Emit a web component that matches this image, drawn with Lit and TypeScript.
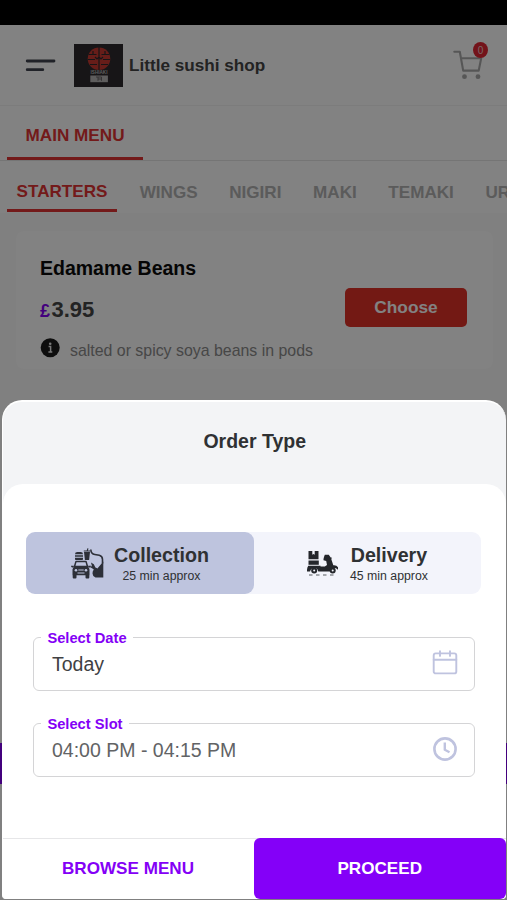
import { LitElement, html, css, svg } from "lit";
import { customElement } from "lit/decorators.js";

const menuIcon = html`<svg class="burger" width="32" height="14" viewBox="0 0 32 14">
  ${svg`<path d="M3.200 3H30M3.200 11.700H18.800" fill="none" stroke="#40444f" stroke-width="2.800" stroke-linecap="round"/>`}
</svg>`;

const logo = html`<svg class="logo" width="49" height="43" viewBox="0 0 49 43">
  <rect width="49" height="43" fill="#2e2a2d" />
  <circle cx="25" cy="14.8" r="11.3" fill="#c93a31" />
  <path
    d="M25 3v23M14.500 10.500h8M27.500 10.500h8M14 15.500h7M29 15.500h7M16 20.500h7M27 20.500h7M19 7v3.500M31 7v3.500M21 13l2 2 2-2 2 2 2-2"
    fill="none" stroke="#2e2a2d" stroke-width="1.200" />
  <text x="25" y="29.500" text-anchor="middle" class="logo-text">ISHIAKI</text>
  <rect x="16.300" y="31.500" width="17.600" height="6.700" fill="#b9b6b7" />
  <path d="M22 33h5.500v3.800M24 33v3.800M24 35h3" fill="none" stroke="#625e60" stroke-width=".9" />
</svg>`;

const cartIcon = html`<svg class="cart" width="30" height="30" viewBox="0 0 30 30">
  <path d="M1.300 1.800H6.800L10.200 20.600H25.700L28.200 8.300H8.200" fill="none" stroke="#a9a9a9"
    stroke-width="2.100" stroke-linejoin="round" stroke-linecap="round" />
  <circle cx="11.500" cy="26.700" r="2.400" fill="#a9a9a9" />
  <circle cx="25" cy="26.700" r="2.400" fill="#a9a9a9" />
</svg>`;

const infoIcon = html`<svg width="20" height="20" viewBox="0 0 20 20">
  <circle cx="10.200" cy="9.700" r="9.500" fill="#1c1c1c" />
  <circle cx="10.200" cy="5.700" r="1.300" fill="#eee" />
  <path d="M8.600 8.500h2v5M8.400 13.900h3.900" fill="none" stroke="#eee" stroke-width="1.500" />
</svg>`;

const collectionIcon = html`<svg width="33" height="31" viewBox="0 0 33 31">
  <g fill="#2d3039">
    <path d="M4 6.200q0-2.200 2.400-2.200h3.200q2.400 0 2.400 2.200zM4 7.200h8v1.600H4zM4 9.800h8v1.400q0 .8-.8.800H4.800q-.8 0-.8-.8z" />
    <path d="M13 4h6l-.9 8h-4.200zM12.800 2.500h2.900l.7-2.300 1.100.3-.6 2h2.300v1h-6.400z" />
    <path d="M1.500 21.500q0-2.200 2.400-3h12.200q2.400.8 2.400 3v5.700H1.500zM1.700 26h3.800v3.500q0 1-1 1H2.700q-1 0-1-1zM14.500 26h3.800v3.500q0 1-1 1h-1.800q-1 0-1-1z" />
    <path d="M0 17.800h2.800v1.700H1.200q-1.200 0-1.200-1.700zM17.200 17.800H20q0 1.700-1.200 1.700h-1.600z" />
    <path d="M22.500 22q1.500-1.200 3.500-.9l6.300-7.600v16H24.500q-3-1.300-3-4 0-2.200 1-3.500z" />
    <path d="M20 14.500l2.800 1.700 1.600 3.200 2.300 1.100-2.700 2.300-2.500-2.300-2.300-1.300 1.700-1.300z" />
  </g>
  <path d="M3.500 18.500L5 13.400h10l1.500 5.100z" fill="none" stroke="#2d3039" stroke-width="1.500" stroke-linejoin="round" />
  <path d="M19.800 1.500q.2 4.500 4 5l4.500.8q3.200.8 3.200 4.200v4" fill="none" stroke="#2d3039" stroke-width="1.600" />
  <circle cx="5" cy="22.300" r="1.300" fill="#bec4de" />
  <circle cx="15" cy="22.300" r="1.300" fill="#bec4de" />
  <path d="M7.300 22h5.400M6.500 25h7" stroke="#bec4de" stroke-width="1.200" />
</svg>`;

const deliveryIcon = html`<svg width="31" height="26" viewBox="0 0 31 26">
  <g fill="#24262b">
    <path d="M1.500 0h3.800v3.700l1.200-.8 1.200.8V0h3.800v8.300h-10z" />
    <path d="M1.500 9.500h10.300v4.300H1.500z" />
    <path d="M1.300 14.800h12.200v.7h4.300l2.200-1.500-.8-4-2.700-.7V8l.5-2 .8-2.200h4l1.900 2.600h1l-.3 2.200 1.900 5.700q4.500-.5 5.700 4.200h-1.500q-1.400-2.200-4-1.200-2.500 1-2.600 3.300H11.300q-.3-3.500-4-3.700-3.500.1-4.200 3.700H0q-.2-4 1.300-5.800z" />
    <circle cx="7.200" cy="19.400" r="3" />
    <circle cx="25.700" cy="19.400" r="3" />
  </g>
  <circle cx="7.200" cy="19.400" r="1" fill="#f3f4fb" />
  <circle cx="25.700" cy="19.400" r="1" fill="#f3f4fb" />
  <path d="M2 24H29" stroke="#8c8e94" stroke-width="1.400" stroke-dasharray="3.500 3.500" />
</svg>`;

const calendarIcon = html`<svg width="26" height="26" viewBox="0 0 26 26">
  <rect x="1.700" y="3.400" width="22.600" height="20" rx="2" fill="none" stroke="#bfc3df" stroke-width="1.900" />
  <path d="M1.700 9.800h22.600M8 1.300v4.600M18 1.300v4.600" fill="none" stroke="#bfc3df" stroke-width="1.900" stroke-linecap="round" />
</svg>`;

const clockIcon = html`<svg width="26" height="26" viewBox="0 0 26 26">
  <circle cx="13" cy="13" r="10.600" fill="none" stroke="#bfc3df" stroke-width="2.600" />
  <path d="M12.800 6.500v7.300l4.700 2.400" fill="none" stroke="#bfc3df" stroke-width="2.400" stroke-linejoin="round" />
</svg>`;

@customElement("app-root")
export class AppRoot extends LitElement {
  static styles = css`
    :host {
      display: block;
      position: relative;
      width: 507px;
      height: 900px;
      overflow: hidden;
      background: #fbfbfb;
      font-family: "Liberation Sans", Arial, sans-serif;
      color: #2f3133;
    }
    * { box-sizing: border-box; }
    svg { display: block; flex: none; }
    .page { display: flex; flex-direction: column; height: 900px; }
    .status { height: 25px; background: #000; flex: none; }
    header {
      display: flex;
      align-items: center;
      height: 81px;
      padding: 0 21px 0 24px;
      border-bottom: 1px solid #f3f3f3;
      background: #fff;
      flex: none;
    }
    .burger { margin-right: 18px; }
    .logo-text { font-size: 4.6px; font-weight: 700; fill: #b9b6b7; }
    .shop { flex: 1; margin-left: 6px; font-size: 17.15px; font-weight: 700; color: #454545; }
    .cart-box { position: relative; margin-right: 3px; }
    .badge {
      position: absolute;
      left: 20px;
      top: -8px;
      width: 15px;
      height: 16px;
      border-radius: 50%;
      background: #e22633;
      color: #f0c8ca;
      font-size: 10px;
      line-height: 17px;
      text-align: center;
    }
    .tabs { display: flex; height: 55px; padding: 0 7px; background: #fff; border-bottom: 1px solid #e6e6e6; flex: none; }
    .tab {
      width: 136px;
      height: 54px;
      border-bottom: 3px solid #e23434;
      color: #e23434;
      font-size: 17.15px;
      font-weight: 700;
      line-height: 59px;
      text-align: center;
    }
    .cats { display: flex; height: 52px; padding-left: 7px; background: #fff; color: #b3b3b3; flex: none; white-space: nowrap; overflow: hidden; }
    .cat { flex: none; font-size: 17.1px; font-weight: 700; line-height: 64px; margin-right: 31.6px; }
    .cat.on {
      width: 110px;
      height: 51px;
      margin-right: 22.700px;
      border-bottom: 3px solid #e23434;
      color: #e23434;
      line-height: 61px;
      text-align: center;
    }
    .card {
      display: flex;
      height: 138px;
      margin: 18px 14px 0 16px;
      padding: 21px 26px 0 24px;
      background: #fff;
      border-radius: 8px;
      flex: none;
    }
    .dish { flex: 1; white-space: nowrap; }
    .name { font-size: 19.5px; font-weight: 700; line-height: 32px; color: #0a0a0a; }
    .price { margin-top: 9px; font-size: 22px; font-weight: 700; line-height: 34px; color: #454545; }
    .price span { font-size: 18px; color: #8400f6; margin-right: 1.5px; }
    .note { display: flex; gap: 10px; margin-top: 10px; font-size: 15.9px; line-height: 26px; color: #8b8b8b; }
    .choose {
      width: 122px;
      height: 39px;
      margin-top: 36px;
      border-radius: 5px;
      background: #e23129;
      color: #fff;
      font-size: 17.3px;
      font-weight: 700;
      line-height: 39px;
      text-align: center;
    }
    .cart-bar { height: 41px; margin-top: 374px; background: #8400f6; flex: none; }
    .shade { position: absolute; inset: 25px 0 0 0; background: rgba(0, 0, 0, 0.49); }
    .sheet {
      position: absolute;
      inset: 400px 1.5px 1px 2px;
      display: flex;
      flex-direction: column;
      background: #f3f4f6;
      border: 1px solid #fff;
      border-width: 2px 0 0 1px;
      border-radius: 20px 20px 4px 4px;
      overflow: hidden;
    }
    .title { height: 82px; font-size: 19.5px; font-weight: 700; line-height: 79px; text-align: center; flex: none; padding-left: 1px; }
    .body {
      flex: 1;
      display: flex;
      flex-direction: column;
      padding: 48px 24.500px 0 23px;
      background: #fff;
      border-radius: 20px 20px 0 0;
    }
    .types { display: flex; height: 62px; background: #f3f4fb; border-radius: 9px; flex: none; }
    .type { display: flex; flex: 1; gap: 10px; padding-left: 45px; }
    .type.on { flex: 0 0 228px; background: #bec4de; border-radius: 9px; }
    .type svg { margin-top: 16px; }
    .type:not(.on) { padding-left: 53px; gap: 12px; }
    .type:not(.on) svg { margin-top: 19px; }
    .label { text-align: center; }
    .kind { font-size: 19.65px; font-weight: 700; line-height: 24px; margin-top: 11px; }
    .wait { font-size: 12.3px; line-height: 16px; margin-top: 1px; }
    .field {
      display: flex;
      align-items: flex-start;
      justify-content: space-between;
      width: 442px;
      margin: 33px 0 0 7px;
      padding: 0 16px 0 10px;
      height: 64px;
      border: 1.4px solid #d4d4d6;
      border-radius: 6px;
      min-width: 0;
      font-size: 19.5px;
      flex: none;
    }
    .field + .field { margin-top: 22px; }
    legend {
      margin-left: -2.600px;
      padding: 2px 6px 0;
      color: #8400f6;
      font-size: 14.700px;
      font-weight: 700;
      line-height: 18px;
    }
    .value { display: flex; justify-content: space-between; width: 100%; padding-left: 8px; line-height: 24px; margin-top: 5px; color: #404143; }
    .value.soft { color: #626365; }
    .value svg { margin-top: -2px; }
    .actions { display: flex; height: 61px; background: #fff; border-top: 1px solid #e6e6e8; flex: none; }
    .action { flex: 1; font-size: 17.1px; font-weight: 700; line-height: 59px; text-align: center; color: #8400f6; }
    .action:first-child { flex: 0 0 251px; padding-right: 1px; }
    .action.main { margin-top: -1px; background: #8400f8; color: #fff; border-radius: 6px; line-height: 61px; }
  `;

  render() {
    return html`
      <div class="page">
        <div class="status"></div>
        <header>
          ${menuIcon} ${logo}
          <div class="shop">Little sushi shop</div>
          <div class="cart-box">${cartIcon}<div class="badge">0</div></div>
        </header>
        <nav class="tabs"><div class="tab">MAIN MENU</div></nav>
        <nav class="cats">
          <div class="cat on">STARTERS</div>
          ${["WINGS", "NIGIRI", "MAKI", "TEMAKI", "URAMAKI"].map((c) => html`<div class="cat">${c}</div>`)}
        </nav>
        <section class="card">
          <div class="dish">
            <div class="name">Edamame Beans</div>
            <div class="price"><span>£</span>3.95</div>
            <div class="note">${infoIcon}<div>salted or spicy soya beans in pods</div></div>
          </div>
          <div class="choose">Choose</div>
        </section>
        <div class="cart-bar"></div>
      </div>
      <div class="shade"></div>
      <section class="sheet">
        <div class="title">Order Type</div>
        <div class="body">
          <div class="types">
            <div class="type on">
              ${collectionIcon}
              <div class="label"><div class="kind">Collection</div><div class="wait">25 min approx</div></div>
            </div>
            <div class="type">
              ${deliveryIcon}
              <div class="label"><div class="kind">Delivery</div><div class="wait">45 min approx</div></div>
            </div>
          </div>
          <fieldset class="field">
            <legend>Select Date</legend>
            <div class="value"><span>Today</span>${calendarIcon}</div>
          </fieldset>
          <fieldset class="field">
            <legend>Select Slot</legend>
            <div class="value soft"><span>04:00 PM - 04:15 PM</span>${clockIcon}</div>
          </fieldset>
        </div>
        <div class="actions">
          <div class="action">BROWSE MENU</div>
          <div class="action main">PROCEED</div>
        </div>
      </section>
    `;
  }
}
